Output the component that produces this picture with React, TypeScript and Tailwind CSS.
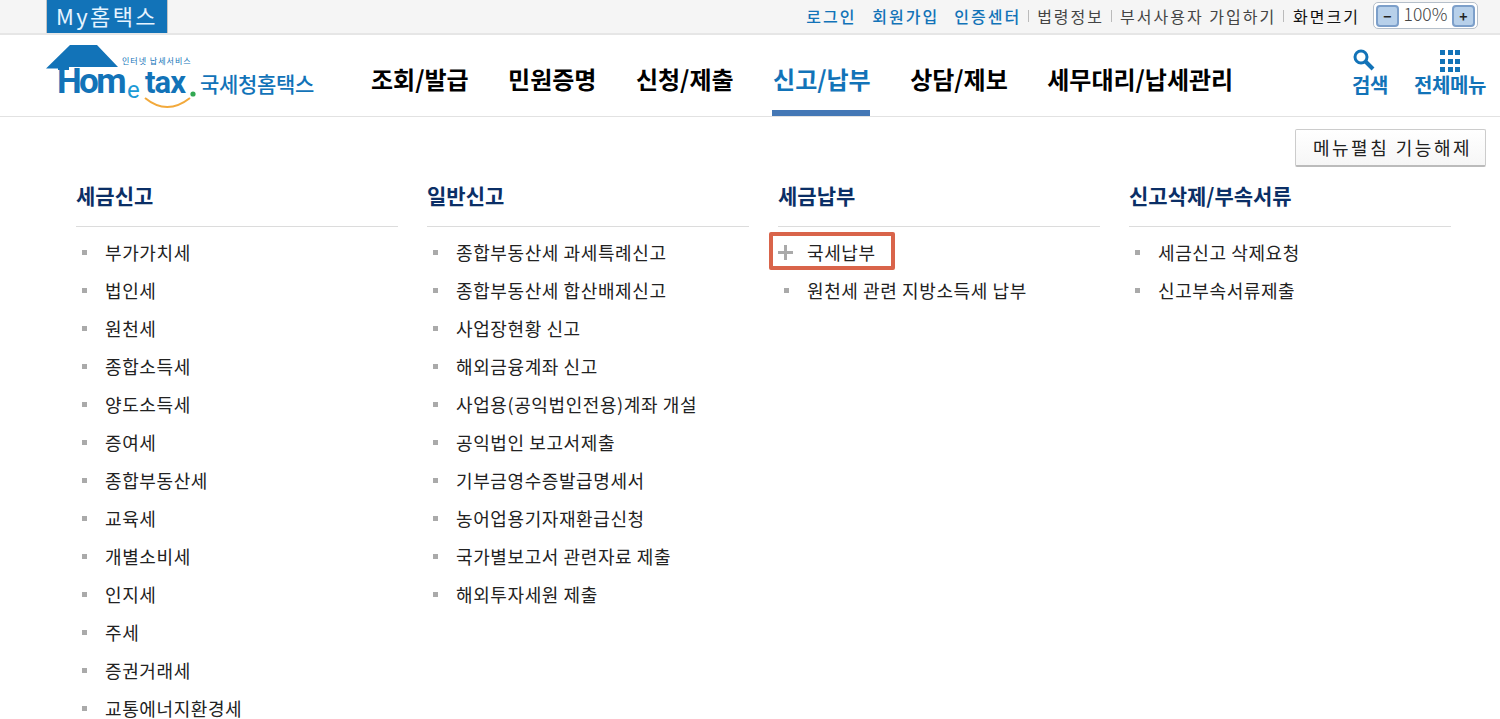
import React from 'react';

const fontStack = '"Noto Sans CJK KR", "Liberation Sans", sans-serif';

const mainMenu = ['조회/발급', '민원증명', '신청/제출', '신고/납부', '상담/제보', '세무대리/납세관리'];

const columns = [
    {
        title: '세금신고',
        items: ['부가가치세', '법인세', '원천세', '종합소득세', '양도소득세', '증여세', '종합부동산세', '교육세', '개별소비세', '인지세', '주세', '증권거래세', '교통에너지환경세'],
    },
    {
        title: '일반신고',
        items: ['종합부동산세 과세특례신고', '종합부동산세 합산배제신고', '사업장현황 신고', '해외금융계좌 신고', '사업용(공익법인전용)계좌 개설', '공익법인 보고서제출', '기부금영수증발급명세서', '농어업용기자재환급신청', '국가별보고서 관련자료 제출', '해외투자세원 제출'],
    },
    {
        title: '세금납부',
        items: ['국세납부', '원천세 관련 지방소득세 납부'],
    },
    {
        title: '신고삭제/부속서류',
        items: ['세금신고 삭제요청', '신고부속서류제출'],
    },
];

const latin = 'Roboto, "Liberation Sans", sans-serif';

const Logo = () => (
    <div className="w-[270px] h-[70px] shrink-0">
        <svg width="270" height="70" viewBox="0 0 270 70">
            {/* roof */}
            <path d="M1 27.5 L25 4 L52 4 L73 26 L24 26 L24 29 L13 29 L13 27.5 Z" fill="#1273b8" />
            <text x="77" y="23" fontSize="8" fill="#1273b8" letterSpacing="1" fontFamily={fontStack}>인터넷 납세서비스</text>
            <text x="12" y="52" fontSize="35" fontWeight="700" fill="#1273b8" letterSpacing="-2.6" fontFamily={latin}>Hom</text>
            <text x="82" y="57" fontSize="24" fontWeight="400" fill="#1b9ad6" fontFamily={latin}>e</text>
            <text x="100" y="52" fontSize="31" fontWeight="700" fill="#1273b8" letterSpacing="-0.9" fontFamily={latin}>tax</text>
            <circle cx="148" cy="53" r="2.6" fill="#32a852" />
            <path d="M100 57 Q122 75 145 57" fill="none" stroke="#f2a93b" strokeWidth="2" />
            <text x="155" y="51" fontSize="21" fontWeight="500" fill="#1273b8" letterSpacing="-0.3" fontFamily={fontStack}>국세청홈택스</text>
        </svg>
    </div>
);

const App: React.FC = () => {
    return (
        <div className="w-[1500px] h-[719px] overflow-hidden bg-white text-[#111]" style={{ fontFamily: fontStack }}>
            {/* top utility bar */}
            <div className="flex justify-between h-[35px] bg-[#f5f5f5] border-b-2 border-[#e6e6e6] pl-[46px] pr-[22px]">
                <div className="w-[122px] h-[33px] bg-[#1273b8] border-x border-[#c4c4c4] text-[#e6f4ff] text-[22px] leading-[31px] text-center tracking-[2.4px]">My홈택스</div>
                <div className="flex items-center h-[31px] text-[16px] tracking-[2px]">
                    <a className="text-[#1273b8] font-medium">로그인</a>
                    <a className="text-[#1273b8] font-medium ml-[16px]">회원가입</a>
                    <a className="text-[#1273b8] font-medium ml-[15px]">인증센터</a>
                    <span className="w-px h-[12px] bg-[#bbb] ml-[7px] mr-[8px]" />
                    <a className="text-[#444]">법령정보</a>
                    <span className="w-px h-[12px] bg-[#bbb] ml-[7px] mr-[8px]" />
                    <a className="text-[#444]">부서사용자 가입하기</a>
                    <span className="w-px h-[12px] bg-[#bbb] ml-[7px] mr-[9px]" />
                    <a className="text-[#111]">화면크기</a>
                    <div className="flex items-center ml-[13px] h-[27px] w-[105px] rounded-[5px] border border-[#b5bfca] bg-white px-[2px] justify-between tracking-normal">
                        <button className="w-[23px] h-[22px] rounded-[4px] border-2 border-[#7c9fca] bg-[#b7d0ea] text-[#222] text-[14px] leading-[14px] font-bold">−</button>
                        <span className="text-[17.5px] leading-[20px] font-light text-[#444] -mt-[3px]">100%</span>
                        <button className="w-[23px] h-[22px] rounded-[4px] border-2 border-[#7c9fca] bg-[#b7d0ea] text-[#222] text-[14px] leading-[14px] font-bold">+</button>
                    </div>
                </div>
            </div>

            {/* main nav */}
            <div className="flex items-center h-[82px] border-b border-[#e2e2e2] pl-[45px]">
                <Logo />
                <nav className="flex items-center gap-[39.5px] ml-[56px] h-full">
                    {mainMenu.map((m) => (
                        <a key={m} className={`relative flex items-center h-full pt-[6px] text-[24px] font-bold ${m === '신고/납부' ? 'text-[#1273b8]' : 'text-black'}`}>
                            {m}
                            {m === '신고/납부' && <span className="absolute left-[-1px] right-[1px] bottom-0 h-[6px] bg-[#4477b5]" />}
                        </a>
                    ))}
                </nav>
                <div className="ml-auto flex items-start pr-[14px] pt-[14px] h-full text-[#1273b8] text-[20px] font-bold">
                    <a className="flex flex-col items-center">
                        <svg width="36" height="24" viewBox="0 0 36 24" fill="none" stroke="#1273b8">
                            <circle cx="9" cy="8" r="6" strokeWidth="3" />
                            <path d="M13.5 12.5 L21 20" strokeWidth="4" />
                        </svg>
                        <span className="leading-[24px] tracking-[-0.4px]">검색</span>
                    </a>
                    <a className="flex flex-col items-center ml-[26px]">
                        <span className="grid grid-cols-3 gap-[2.5px] h-[24px] w-[20px] pt-[1px]">
                            {Array.from({ length: 9 }).map((_, i) => <span key={i} className="w-[5px] h-[5px] bg-[#1273b8]" />)}
                        </span>
                        <span className="leading-[24px] tracking-[-0.4px]">전체메뉴</span>
                    </a>
                </div>
            </div>

            {/* toggle button */}
            <div className="flex justify-end pr-[14px] pt-[12px]">
                <button className="w-[191px] h-[38px] pl-[4px] rounded-[2px] border border-[#ccc] border-b-2 border-b-[#bbb] bg-gradient-to-b from-white to-[#f6f6f6] text-[18px] text-[#222] tracking-[2.5px]">메뉴펼침 기능해제</button>
            </div>

            {/* sub menu columns */}
            <div className="grid grid-cols-4 gap-[29px] pl-[76px] pr-[49px] pt-[11px]">
                {columns.map((col) => (
                    <div key={col.title}>
                        <h3 className="h-[49px] leading-[34px] border-b border-[#dcdcdc] text-[21px] font-bold text-[#0b2f66] mb-[6px]">{col.title}</h3>
                        <ul>
                            {col.items.map((item) => (
                                <li key={item} className="relative flex items-center h-[38px] text-[18px] text-[#222] tracking-[0.6px]">
                                    {item === '국세납부' ? (
                                        <>
                                            <span className="absolute left-[-9px] top-[-1px] w-[126px] h-[38px] border-4 border-[#d9644a] rounded-[2px]" />
                                            <span className="relative w-[15px] h-[15px] mr-[14px]">
                                                <span className="absolute left-[6px] top-0 w-[3px] h-[15px] bg-[#aaa]" />
                                                <span className="absolute left-0 top-[6px] w-[15px] h-[3px] bg-[#aaa]" />
                                            </span>
                                        </>
                                    ) : (
                                        <span className="w-[5px] h-[5px] bg-[#aaa] ml-[6px] mr-[18px]" />
                                    )}
                                    {item}
                                </li>
                            ))}
                        </ul>
                    </div>
                ))}
            </div>
        </div>
    );
};

export default App;
